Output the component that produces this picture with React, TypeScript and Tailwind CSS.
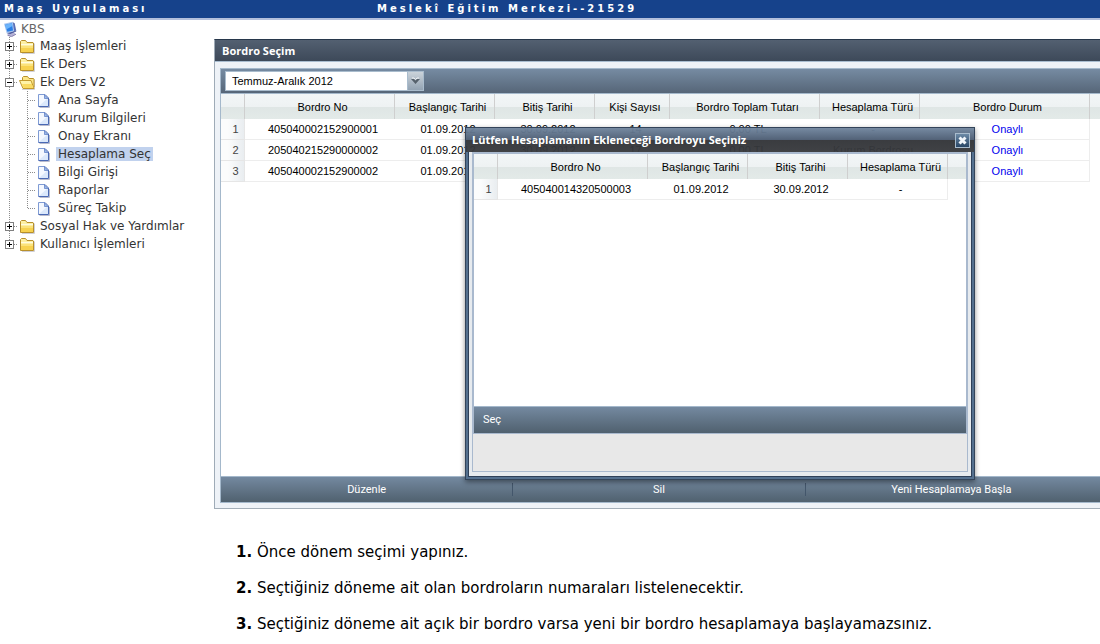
import React from "react";

interface TreeItem {
  label: string;
  open?: boolean;
  children?: string[];
}

interface Column {
  title: string;
  width: number;
}

const tree: TreeItem[] = [
  { label: "Maaş İşlemleri" },
  { label: "Ek Ders" },
  {
    label: "Ek Ders V2",
    open: true,
    children: [
      "Ana Sayfa",
      "Kurum Bilgileri",
      "Onay Ekranı",
      "Hesaplama Seç",
      "Bilgi Girişi",
      "Raporlar",
      "Süreç Takip",
    ],
  },
  { label: "Sosyal Hak ve Yardımlar" },
  { label: "Kullanıcı İşlemleri" },
];

const columns: Column[] = [
  { title: "Bordro No", width: 150 },
  { title: "Başlangıç Tarihi", width: 100 },
  { title: "Bitiş Tarihi", width: 100 },
  { title: "Kişi Sayısı", width: 75 },
  { title: "Bordro Toplam Tutarı", width: 150 },
  { title: "Hesaplama Türü", width: 100 },
  { title: "Bordro Durum", width: 170 },
];

const rows = [
  ["405040002152900001", "01.09.2012", "30.09.2012", "14", "0,00 TL", "-", "Onaylı"],
  ["205040215290000002", "01.09.2012", "30.09.2012", "17", "0,00 TL", "Kurum Bordrosu", "Onaylı"],
  ["405040002152900002", "01.09.2012", "", "", "", "", "Onaylı"],
];

const dialogColumns: Column[] = [
  { title: "Bordro No", width: 150 },
  { title: "Başlangıç Tarihi", width: 100 },
  { title: "Bitiş Tarihi", width: 100 },
  { title: "Hesaplama Türü", width: 100 },
];

const dialogRows = [["405040014320500003", "01.09.2012", "30.09.2012", "-"]];

const notes = [
  "Önce dönem seçimi yapınız.",
  "Seçtiğiniz döneme ait olan bordroların numaraları listelenecektir.",
  "Seçtiğiniz döneme ait açık bir bordro varsa yeni bir bordro hesaplamaya başlayamazsınız.",
];

const ComputerIcon = () => (
  <svg width="16" height="16" viewBox="0 0 16 16" className="shrink-0">
    <path d="M6 12.500l5.500-1.500 2.500 2.200-4.500 2.500-4-1.500z" fill="#b4b2d6" />
    <path d="M5.500 14.200l4 1.500 4.500-2.500" fill="none" stroke="#77709f" strokeWidth=".8" />
    <path d="M10.500 1l2.200 1.200 1.500 7.300-3 1.500z" fill="#5b6fb4" />
    <path d="M2 2.800L10.800.8l1.400 9.400-7.500 2z" fill="#a5c4f0" />
    <path d="M3.200 3.700l6.700-1.500 1.100 7.200-5.600 1.400z" fill="#2a7fe6" />
    <path d="M3.200 3.700l6.700-1.500.5 2.800-6.200 3.500z" fill="#6cb4fa" />
    <path d="M4.700 12.200l7.500-2 2-.7v1l-6 2.500z" fill="#4b5a9c" />
  </svg>
);

const FolderIcon = ({ open }: { open?: boolean }) => (
  <svg width="18" height="18" viewBox="0 0 18 18" className="shrink-0">
    <path d="M4 16.500h12.500V6.500" fill="none" stroke="#d0d0d8" />
    {open ? (
      <>
        <path d="M4.500 14V4.500l1-1h4l1.500 2h4.500l.5.500v8z" fill="#fbe588" stroke="#b8902c" />
        <path d="M1.500 7.500h11.500l3 8H5z" fill="#fff3a8" stroke="#c39a2e" />
        <path d="M4 11h9.800l1.500 4H5.500z" fill="#fadb62" />
      </>
    ) : (
      <>
        <path d="M2.500 15.500V4.500l1-1h4l1.500 2h6l.5.500v9.500z" fill="#fdf0a4" stroke="#b8902c" />
        <path d="M3 11h12v4H3z" fill="#f7d250" />
        <path d="M3 9h12v2H3z" fill="#fbe27a" />
        <path d="M3 7.500h12" stroke="#fffbe0" />
      </>
    )}
  </svg>
);

const PageIcon = () => (
  <svg width="18" height="18" viewBox="0 0 18 18" className="shrink-0">
    <path d="M3.500 16.500h10V8" fill="none" stroke="#b9bcce" />
    <path d="M2.500 3.500H9l3.500 3.500v8.500h-10z" fill="#f4f8ff" />
    <path d="M3 15l9-8v8z" fill="#dbe8fb" />
    <path d="M2.500 15.500v-12H9" fill="none" stroke="#7f9bd4" />
    <path d="M9 3.500L12.500 7v8.500h-10" fill="none" stroke="#4a69b4" />
    <path d="M8.500 4v3.500H12z" fill="#9dbbec" stroke="#5878c0" strokeWidth=".7" />
  </svg>
);

interface GutterProps {
  line?: boolean;
  last?: boolean;
  elbow?: boolean;
  toggle?: "plus" | "minus";
}

const Gutter = ({ line, last, elbow, toggle }: GutterProps) => (
  <svg width="18" height="18" viewBox="0 0 18 18" className="shrink-0" shapeRendering="crispEdges">
    <g stroke="#8c8c8c" strokeDasharray="1 1">
      {line && <path d={last ? "M9.500 0V9" : "M9.500 0V18"} />}
      {elbow && <path d="M10 9.500H18" />}
    </g>
    {toggle && (
      <>
        <rect x="5.500" y="5.500" width="8" height="8" fill="#fff" stroke="#808080" />
        <path d="M7 9.500h5" stroke="#000" />
        {toggle === "plus" && <path d="M9.500 7v5" stroke="#000" />}
      </>
    )}
  </svg>
);

const Sidebar = () => (
  <nav className="w-[214px] shrink-0 font-['DejaVu_Sans',sans-serif] text-[12px] leading-[14px] text-[#333]">
    <div className="flex h-[17px] items-center pl-[2px]">
      <ComputerIcon />
      <a href="#kbs" className="pl-[3px] text-[#666]">
        KBS
      </a>
    </div>
    <ul>
      {tree.map((item, i) => (
        <li key={item.label}>
          <div className="flex h-[18px] items-center">
            <Gutter line elbow last={i === tree.length - 1} toggle={item.open ? "minus" : "plus"} />
            <FolderIcon open={item.open} />
            <a href="#klasor" className="ml-[2px] px-[2px]">
              {item.label}
            </a>
          </div>
          {item.children && (
            <ul>
              {item.children.map((child, j) => (
                <li key={child} className="flex h-[18px] items-center">
                  <Gutter line />
                  <Gutter line elbow last={j === item.children!.length - 1} />
                  <PageIcon />
                  <a
                    href="#sayfa"
                    className={child === "Hesaplama Seç" ? "ml-[2px] bg-[#c1d2ee] px-[2px]" : "ml-[2px] px-[2px]"}
                  >
                    {child}
                  </a>
                </li>
              ))}
            </ul>
          )}
        </li>
      ))}
    </ul>
  </nav>
);

interface GridProps {
  columns: Column[];
  rows: string[][];
}

const Grid: React.FC<GridProps> = ({ columns, rows }) => (
  <table className="w-full table-fixed border-separate border-spacing-0 text-center font-['Liberation_Sans',Arial,sans-serif] text-[11px] leading-[14px] text-black">
    <colgroup>
      <col style={{ width: 24 }} />
      {columns.map((col) => (
        <col key={col.title} style={{ width: col.width }} />
      ))}
      <col />
    </colgroup>
    <thead>
      <tr className="h-[25px] bg-[linear-gradient(#f2f6f7_0%,#eef2f3_50%,#dfe6e5_54%,#e3eae8_100%)]">
        <th className="border-r border-[#cfcfcf]" />
        {columns.map((col) => (
          <th key={col.title} className="border-r border-[#cfcfcf] pl-1.5 font-normal whitespace-nowrap">
            {col.title}
          </th>
        ))}
        <th />
      </tr>
    </thead>
    <tbody>
      {rows.map((row, i) => (
        <tr key={row[0]} className="h-[21px]">
          <td className="border-r border-b border-[#e6e6e6] bg-linear-to-r from-[#fbfcfc] from-30% to-[#e9edf0] pl-1.5 text-[#444]">
            {i + 1}
          </td>
          {row.map((cell, j) => (
            <td
              key={j}
              className={`border-b border-[#ededed] pl-1.5 ${j === row.length - 1 ? "border-r" : ""} ${cell === "Onaylı" ? "text-[#0000ee]" : ""}`}
            >
              {cell}
            </td>
          ))}
          <td />
        </tr>
      ))}
    </tbody>
  </table>
);

const Dialog = () => (
  <section
    role="dialog"
    aria-labelledby="dialog-title"
    className="absolute top-[87px] left-[250px] w-[510px] border border-[#33445a] shadow-[0_2px_5px_rgba(0,0,0,0.45)]"
  >
    <header className="flex h-6 items-center justify-between bg-[linear-gradient(rgba(112,133,158,0.96)_0%,rgba(75,91,113,0.96)_50%,rgba(50,52,56,0.96)_52%,rgba(56,58,62,0.96)_100%)] pr-1 pl-1.5">
      <h2 id="dialog-title" className="font-['Open_Sans',sans-serif] text-[11px] leading-4 font-bold text-white">
        Lütfen Hesaplamanın Ekleneceği Bordroyu Seçiniz
      </h2>
      <button aria-label="Kapat" className="size-[15px] border border-[#a9bccd] bg-linear-to-b from-[#6d8aa6] to-[#284666]">
        <svg width="13" height="13" viewBox="0 0 13 13">
          <path d="M3.500 3.500l6 6M9.500 3.500l-6 6" stroke="#f2f6fa" strokeWidth="3" />
        </svg>
      </button>
    </header>
    <div className="border-x-2 border-b-2 border-[#54708f] bg-[#e6eaee]">
      <div className="border-x border-b border-[#2e4059] px-[3px] pb-1">
        <div className="border border-[#a9b9ce] bg-[#e8e8e8]">
          <div className="border border-[#a9b9ce] bg-white">
            <div className="min-h-[252px]">
              <Grid columns={dialogColumns} rows={dialogRows} />
            </div>
            <div className="flex h-[27px] items-center border-t border-[#a4b8cb] bg-linear-to-b from-[#7489a0] to-[#50616f] pl-[9px]">
              <button className="font-[Roboto,sans-serif] text-[11px] leading-4 text-white">Seç</button>
            </div>
          </div>
          <div className="h-[37px]" />
        </div>
      </div>
    </div>
  </section>
);

const BordroPanel = () => (
  <section className="relative border-t border-b border-l border-t-[#27374b] border-b-[#a3aeb8] border-l-[#9fabb7] bg-[#eef2f7]">
    <h1 className="border-b border-[#a9bdd0] bg-linear-to-b from-[#536071] to-[#3d4959] px-[7px] py-[2px] font-['Open_Sans',sans-serif] text-[11px] leading-[17px] font-bold text-white">
      Bordro Seçim
    </h1>
    <div className="pt-1.5 pb-[5px] pl-[5px]">
      <div className="border-y border-l border-[#a4b8cb] bg-white">
        <div className="flex h-[25px] items-center border-b border-[#a4b8cb] bg-linear-to-b from-[#768ba2] to-[#566678] pl-1">
          <div className="relative w-[199px]">
            <select
              aria-label="Dönem"
              className="block h-5 w-full appearance-none border border-[#a9bccd] bg-white pl-1.5 font-['Liberation_Sans',Arial,sans-serif] text-[11px] leading-4 text-black"
            >
              <option>Temmuz-Aralık 2012</option>
            </select>
            <span className="pointer-events-none absolute inset-y-0 right-0 flex w-[17px] items-center justify-center border border-[#a9bccd] bg-linear-to-b from-[#cbd3da] to-[#93a3b3]">
              <svg width="9" height="8" viewBox="0 0 9 8">
                <path d="M0 2h3l1.500 1.500L6 2h3L4.500 7z" fill="#56616c" />
                <path d="M1 1h2l1.500 1.500L6 1h2" fill="none" stroke="#eef1f4" />
              </svg>
            </span>
          </div>
        </div>
        <div className="min-h-[382px]">
          <Grid columns={columns} rows={rows} />
        </div>
        <div className="flex h-[26px] items-center border-t border-[#a4b8cb] bg-linear-to-b from-[#7489a0] to-[#50616f] pr-[3px] font-[Roboto,sans-serif] text-[11px] leading-[13px] text-white">
          <button className="flex-1 border-r border-[#43566b]">Düzenle</button>
          <button className="flex-1 border-r border-[#43566b]">Sil</button>
          <button className="flex-1">Yeni Hesaplamaya Başla</button>
        </div>
      </div>
    </div>
    <Dialog />
  </section>
);

const App = () => (
  <div className="min-h-screen overflow-x-hidden bg-white">
    <header className="grid h-5 grid-cols-[373px_1fr] items-center border-b-2 border-[#b3bfdc] bg-[#16428b] pl-1 font-['DejaVu_Sans',sans-serif] text-[10px] leading-[18px] font-bold tracking-[3px] text-white">
      <span>Maaş Uygulaması</span>
      <span>Meslekî Eğitim Merkezi--21529</span>
    </header>
    <div className="flex">
      <Sidebar />
      <main className="min-w-0 flex-1 pt-[19px]">
        <BordroPanel />
        <ol className="flex flex-col gap-4 pt-[33px] pl-[22px] font-['DejaVu_Sans',sans-serif] text-[15px] leading-5 text-black">
          {notes.map((note, i) => (
            <li key={note} className="whitespace-nowrap">
              <b>{i + 1}.</b> {note}
            </li>
          ))}
        </ol>
      </main>
    </div>
  </div>
);

export default App;
